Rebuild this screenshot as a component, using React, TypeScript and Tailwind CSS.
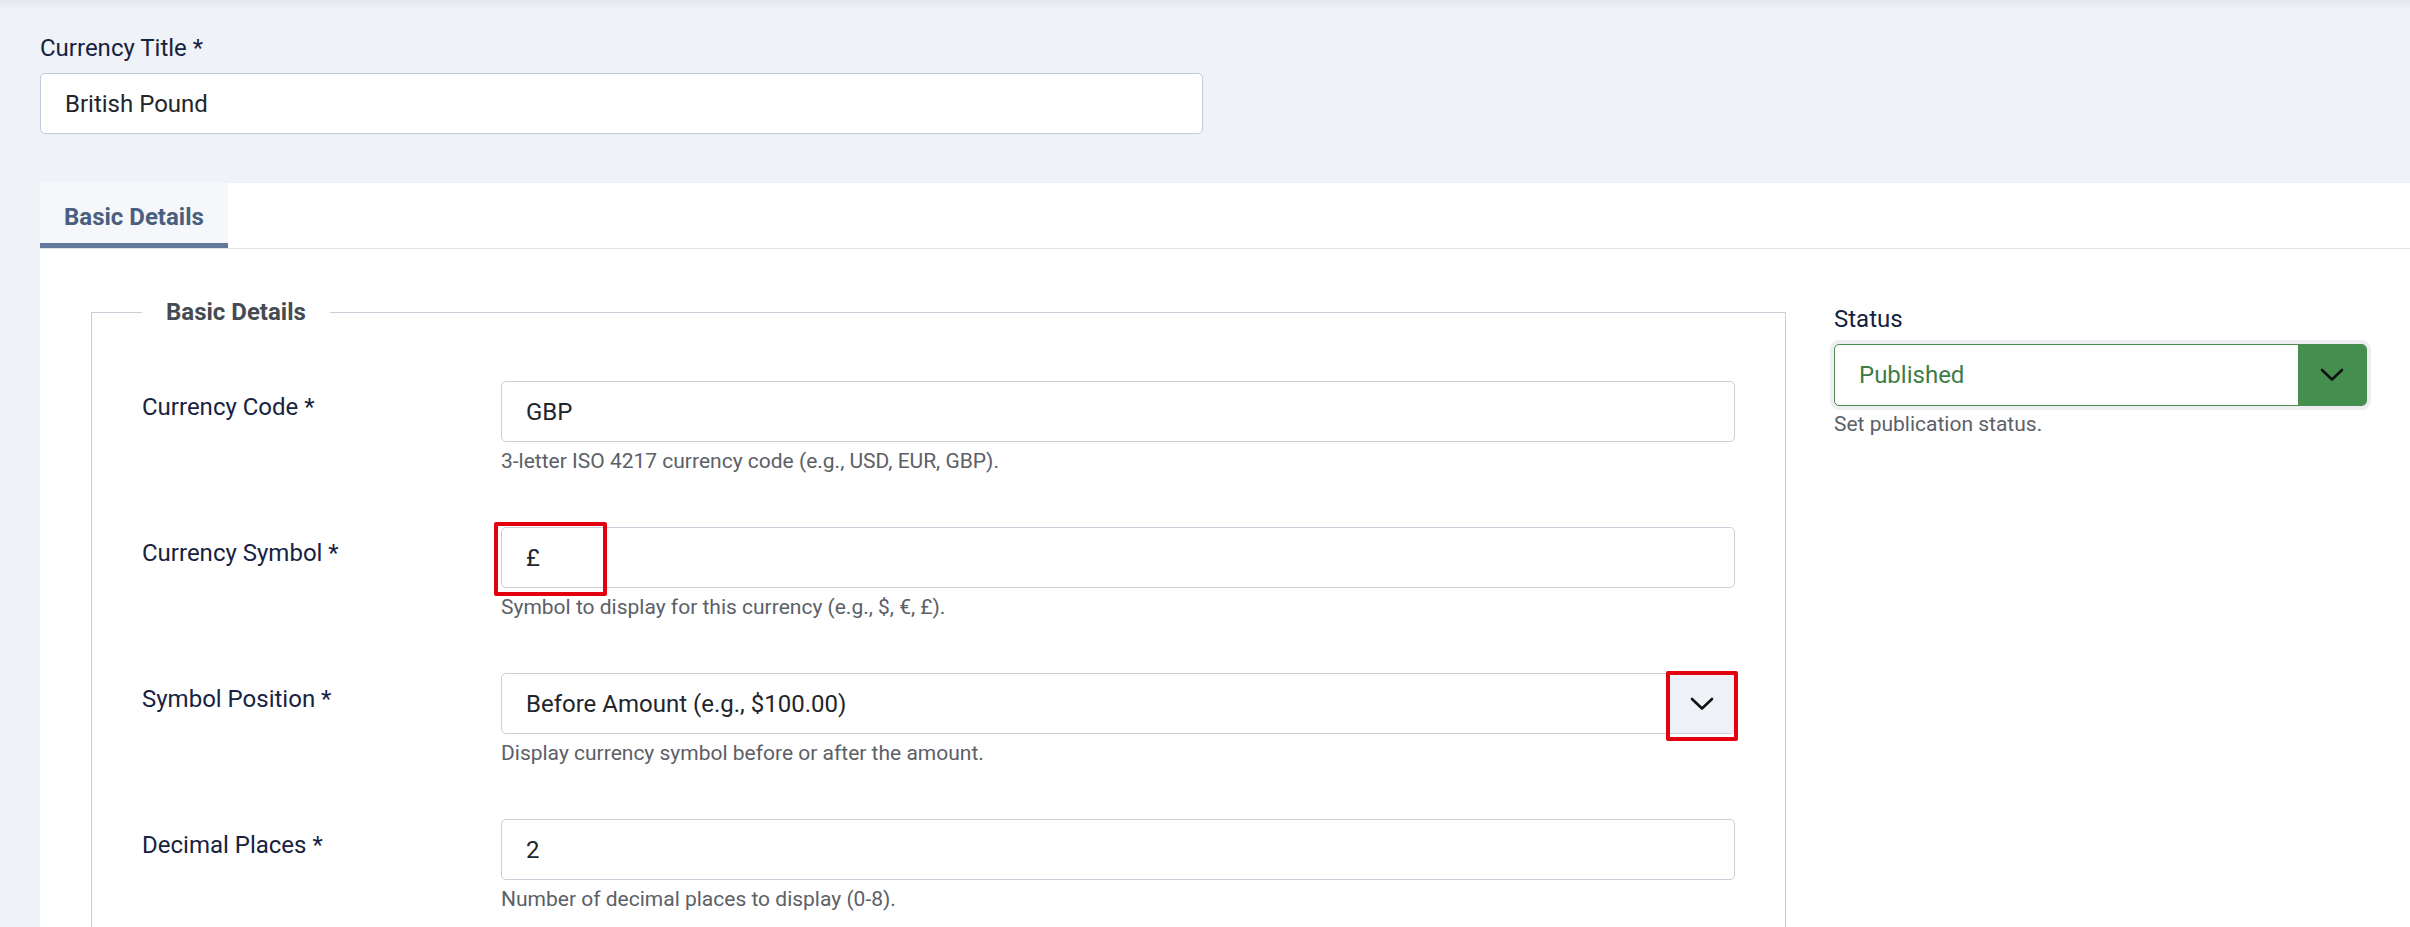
import React from "react";

type Row = {
  label: string;
  value: string;
  help: string;
  kind?: "text" | "select";
  markValue?: boolean;
  markToggle?: boolean;
};

const rows: Row[] = [
  {
    label: "Currency Code *",
    value: "GBP",
    help: "3-letter ISO 4217 currency code (e.g., USD, EUR, GBP).",
  },
  {
    label: "Currency Symbol *",
    value: "£",
    help: "Symbol to display for this currency (e.g., $, €, £).",
    markValue: true,
  },
  {
    label: "Symbol Position *",
    value: "Before Amount (e.g., $100.00)",
    help: "Display currency symbol before or after the amount.",
    kind: "select",
    markToggle: true,
  },
  {
    label: "Decimal Places *",
    value: "2",
    help: "Number of decimal places to display (0-8).",
  },
];

function Chevron() {
  return (
    <svg width="24" height="14" viewBox="0 0 24 14" fill="none">
      <polyline
        points="2,2 12,11.5 22,2"
        stroke="#111"
        strokeWidth="2.6"
        strokeLinecap="round"
        strokeLinejoin="round"
      />
    </svg>
  );
}

function FieldRow({ row }: { row: Row }) {
  return (
    <div className="flex mb-[50px]">
      <label className="w-[359px] shrink-0 pt-[8px] text-[24px] leading-[36px] text-[#17223f]">
        {row.label}
      </label>
      <div className="flex-1">
        <div className="relative h-[61px] rounded-[5px] border border-[#c9ced9] bg-white flex items-center pl-[24px] text-[24px] text-[#22262a]">
          <span>{row.value}</span>
          {row.kind === "select" && (
            <div className="absolute right-0 top-0 bottom-0 w-[64px] rounded-r-[4px] bg-[#eef1f6] flex items-center justify-center">
              <Chevron />
            </div>
          )}
          {row.markValue && (
            <div className="absolute left-[-8px] top-[-6px] w-[113px] h-[74px] border-[4px] border-[#e3000f] rounded-[2px]" />
          )}
          {row.markToggle && (
            <div className="absolute right-[-4px] top-[-3px] w-[72px] h-[70px] border-[4px] border-[#e3000f] rounded-[2px]" />
          )}
        </div>
        <p className="mt-[4px] text-[21px] leading-[31px] text-[#5c6067]">{row.help}</p>
      </div>
    </div>
  );
}

export default function App() {
  return (
    <div className="relative h-[927px] overflow-hidden bg-[#eff2f7] font-['Roboto',_'Noto_Sans',_sans-serif]">
      <div className="absolute top-0 inset-x-0 h-[9px] bg-linear-to-b from-[#e3e7ee] to-[#eff2f7]" />

      <div className="relative pl-[40px] pt-[30px]">
        <label className="block text-[24px] leading-[36px] text-[#17223f]">Currency Title *</label>
        <div className="mt-[7px] w-[1163px] h-[61px] rounded-[5px] border border-[#c3cad8] bg-white flex items-center pl-[24px] text-[24px] text-[#22262a]">
          British Pound
        </div>

        <div className="mt-[49px] bg-white">
          {/* tab strip */}
          <div className="flex h-[66px] border-b border-[#e2e5eb]">
            <div className="w-[188px] h-[65px] bg-[#f5f7fa] border-b-[5px] border-[#64789b] flex items-center pl-[24px] pt-[8px] text-[24px] font-bold text-[#4a5e80]">
              Basic Details
            </div>
          </div>

          {/* tab content */}
          <div className="flex pl-[51px] pt-[45px] gap-[48px]">
            <fieldset className="w-[1695px] shrink-0 border border-[#c8cdd8] pl-[50px] pr-[50px] pt-[51px]">
              <legend className="px-[24px] text-[24px] leading-[36px] font-bold text-[#454b53]">
                Basic Details
              </legend>
              {rows.map((r) => (
                <FieldRow key={r.label} row={r} />
              ))}
            </fieldset>

            <div className="w-[533px] shrink-0 pt-[7px]">
              <label className="block text-[24px] leading-[36px] text-[#17223f]">Status</label>
              <div className="mt-[7px] h-[62px] rounded-[5px] border border-[#4b8a50] bg-white flex items-stretch overflow-hidden shadow-[0_0_0_4px_#eceef2]">
                <div className="flex-1 flex items-center pl-[24px] text-[24px] text-[#3d7c44]">Published</div>
                <div className="w-[68px] bg-[#448f4e] flex items-center justify-center">
                  <Chevron />
                </div>
              </div>
              <p className="mt-[3px] text-[21px] leading-[31px] text-[#5c6067]">Set publication status.</p>
            </div>
          </div>
        </div>
      </div>
    </div>
  );
}
